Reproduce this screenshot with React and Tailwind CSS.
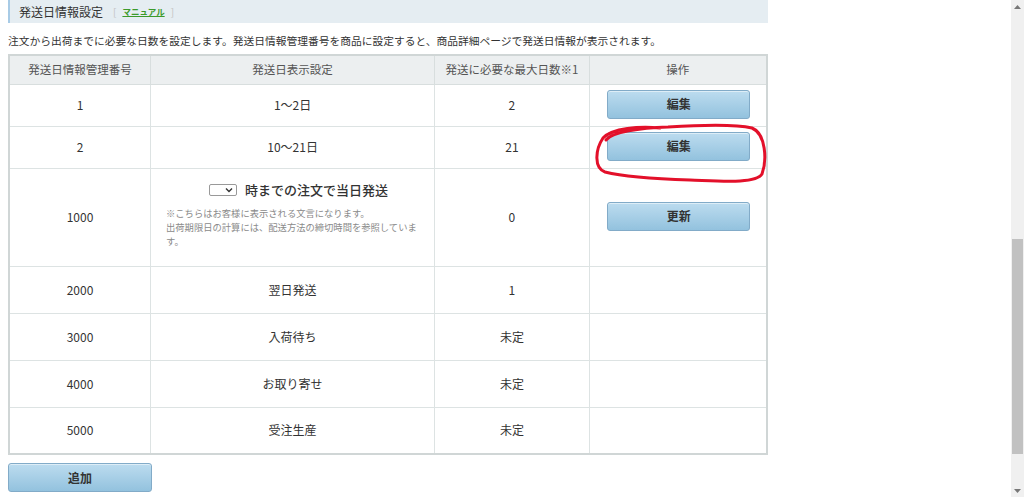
import React from 'react';

const rows = [
  { id: '1', label: '1〜2日', days: '2', action: '編集' },
  { id: '2', label: '10〜21日', days: '21', action: '編集' },
  { id: '1000', special: true, days: '0', action: '更新' },
  { id: '2000', label: '翌日発送', days: '1' },
  { id: '3000', label: '入荷待ち', days: '未定' },
  { id: '4000', label: 'お取り寄せ', days: '未定' },
  { id: '5000', label: '受注生産', days: '未定' },
];

const BlueButton = ({ children, className = '' }) => (
  <button
    className={
      'h-[29px] rounded-[3px] border border-[#82abc8] bg-gradient-to-b from-[#bcdcef] to-[#93c2de] text-[12px] font-bold text-[#333] shadow-[inset_0_1px_0_rgba(255,255,255,0.5)] ' +
      className
    }
  >
    {children}
  </button>
);

export default function App() {
  return (
    <div
      className="relative flex h-[497px] w-[1024px] overflow-hidden bg-white text-[#333]"
      style={{ fontFamily: '"Noto Sans CJK JP", "Noto Sans", sans-serif' }}
    >
      <div className="flex-1 pl-2">
        <div className="flex h-[23px] w-[760px] items-center border-l-2 border-[#a8cbe6] bg-[#e5edf2] pl-[9px] text-[12px] text-[#333]">
          <span>発送日情報設定</span>
          <span className="ml-[10px] text-[10px] text-[#c4c4c4]">[</span>
          <span className="mx-[6px] text-[8.5px] font-bold text-[#3b9a2b] underline">マニュアル</span>
          <span className="text-[10px] text-[#c4c4c4]">]</span>
        </div>

        <p className="mt-[9px] h-[17px] text-[10.75px] leading-[17px]">
          注文から出荷までに必要な日数を設定します。発送日情報管理番号を商品に設定すると、商品詳細ページで発送日情報が表示されます。
        </p>

        <table className="mt-[5px] w-[760px] border-collapse border-2 border-[#d0d6d6] text-center text-[12px]">
          <colgroup>
            <col className="w-[142px]" />
            <col className="w-[285px]" />
            <col className="w-[155px]" />
            <col className="w-[178px]" />
          </colgroup>
          <thead>
            <tr className="h-[29px] bg-[#eceff0] text-[11.5px] text-[#555]">
              <th className="border border-[#d8dede] font-normal">発送日情報管理番号</th>
              <th className="border border-[#d8dede] font-normal">発送日表示設定</th>
              <th className="border border-[#d8dede] font-normal">発送に必要な最大日数※1</th>
              <th className="border border-[#d8dede] font-normal">操作</th>
            </tr>
          </thead>
          <tbody>
            {rows.map((r) => (
              <tr
                key={r.id}
                className={r.special ? 'h-[98px]' : r.action ? 'h-[42px]' : 'h-[47px]'}
              >
                <td className="border border-[#dde3e3]">{r.id}</td>
                <td className="border border-[#dde3e3]">
                  {r.special ? (
                    <div className="px-[15px] pb-[6px] text-left">
                      <div className="flex items-center justify-center gap-[8px] pl-[12px]">
                        <span className="flex h-[12px] w-[28px] items-center justify-end rounded-[2px] border border-[#999] bg-white pr-[3px]">
                          <svg width="8" height="6" viewBox="0 0 8 6">
                            <path d="M1 1.5 L4 4.5 L7 1.5" fill="none" stroke="#333" strokeWidth="1.4" />
                          </svg>
                        </span>
                        <span className="text-[13px] font-medium">時までの注文で当日発送</span>
                      </div>
                      <div className="mt-[6px] text-[9.3px] leading-[14px] text-[#8a8a8a]">
                        ※こちらはお客様に表示される文言になります。
                        <br />
                        出荷期限日の計算には、配送方法の締切時間を参照しています。
                      </div>
                    </div>
                  ) : (
                    r.label
                  )}
                </td>
                <td className="border border-[#dde3e3]">{r.days}</td>
                <td className="border border-[#dde3e3]">
                  {r.action && (
                    <div className="flex justify-center pb-[2px] pl-[2px]">
                      <BlueButton className="w-[143px]">{r.action}</BlueButton>
                    </div>
                  )}
                </td>
              </tr>
            ))}
          </tbody>
        </table>

        <div className="mt-[8px]">
          <BlueButton className="w-[144px]">追加</BlueButton>
        </div>
      </div>

      <div className="flex w-[13px] flex-col items-center bg-[#f0f0f0]">
        <div className="flex h-[13px] items-center justify-center">
          <svg width="7" height="4" viewBox="0 0 7 4">
            <path d="M0 4 L3.5 0 L7 4 Z" fill="#777" />
          </svg>
        </div>
        <div className="h-[226px]" />
        <div className="h-[215px] w-[11px] bg-[#c1c1c1]" />
        <div className="flex-1" />
        <div className="flex h-[13px] items-center justify-center">
          <svg width="7" height="4" viewBox="0 0 7 4">
            <path d="M0 0 L3.5 4 L7 0 Z" fill="#777" />
          </svg>
        </div>
      </div>

      <svg
        className="pointer-events-none absolute left-0 top-0"
        width="1024"
        height="497"
        viewBox="0 0 1024 497"
      >
        <path
          d="M606 140 C 612 132, 640 128, 668 127 C 700 125, 735 124, 752 128 C 766 134, 767 160, 762 174 C 756 184, 720 181, 690 180 C 660 179, 625 177, 605 172 C 594 168, 595 150, 603 138 C 612 128, 640 126, 660 128"
          fill="none"
          stroke="#e3102a"
          strokeWidth="3"
          strokeLinecap="round"
        />
      </svg>
    </div>
  );
}
